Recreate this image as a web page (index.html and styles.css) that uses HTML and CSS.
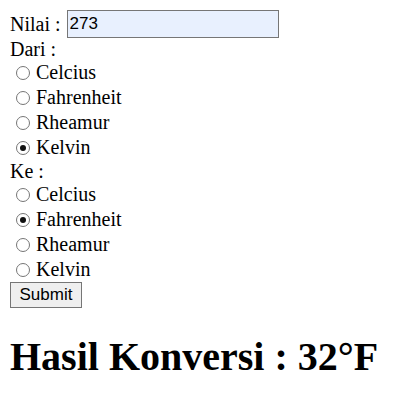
FILE: index.html
```html
<!DOCTYPE html>
<html>
<head>
<meta charset="utf-8">
<link rel="stylesheet" href="styles.css">
</head>
<body>
<form class="form">
  <div class="row-input"><span>Nilai :</span><input class="nilai" type="text" value="273"></div>
  <div class="label">Dari :</div>
  <label class="opt"><input class="radio" type="radio" name="dari"> Celcius</label>
  <label class="opt"><input class="radio" type="radio" name="dari"> Fahrenheit</label>
  <label class="opt"><input class="radio" type="radio" name="dari"> Rheamur</label>
  <label class="opt"><input class="radio" type="radio" name="dari" checked> Kelvin</label>
  <div class="label">Ke :</div>
  <label class="opt"><input class="radio" type="radio" name="ke"> Celcius</label>
  <label class="opt"><input class="radio" type="radio" name="ke" checked> Fahrenheit</label>
  <label class="opt"><input class="radio" type="radio" name="ke"> Rheamur</label>
  <label class="opt"><input class="radio" type="radio" name="ke"> Kelvin</label>
  <div class="submit-row"><button class="submit" type="button">Submit</button></div>
</form>
<h1 class="hasil">Hasil Konversi : 32°F</h1>
</body>
</html>
```
FILE: styles.css
```css
html, body { background: #fff; }
body {
  margin: 10px;
  font-family: "Liberation Serif", "Times New Roman", serif;
  font-size: 20px;
  color: #000;
}
.form { margin: 0; }
.row-input {
  height: 28px;
  display: flex;
  align-items: center;
  gap: 6px;
}
.nilai {
  width: 212px;
  height: 28px;
  box-sizing: border-box;
  border: 1px solid #767676;
  background: #e8f0fe;
  font-family: "Liberation Sans", Arial, sans-serif;
  font-size: 17px;
  padding: 1px 2px;
  margin: 0;
  color: #000;
}
.label {
  height: 22px;
  line-height: 22px;
}
.opt {
  display: flex;
  align-items: center;
  height: 25px;
  padding-left: 6px;
  gap: 6px;
}
.radio {
  appearance: none;
  -webkit-appearance: none;
  width: 14px;
  height: 14px;
  margin: 0;
  border: 1px solid #767676;
  border-radius: 50%;
  background: #fff;
  box-sizing: border-box;
  display: grid;
  place-items: center;
  flex: none;
}
.radio:checked::after {
  content: "";
  width: 6px;
  height: 6px;
  border-radius: 50%;
  background: #111;
}
.submit-row { height: 26px; display: flex; align-items: flex-start; }
.submit {
  font-family: "Liberation Sans", Arial, sans-serif;
  font-size: 17px;
  height: 26px;
  width: 72px;
  padding: 0;
  border: 1px solid #767676;
  background: #efefef;
  border-radius: 0;
  margin: 0;
  color: #000;
}
.hasil {
  font-size: 40px;
  font-weight: bold;
  margin: 26px 0 0;
  line-height: 46px;
}
```
